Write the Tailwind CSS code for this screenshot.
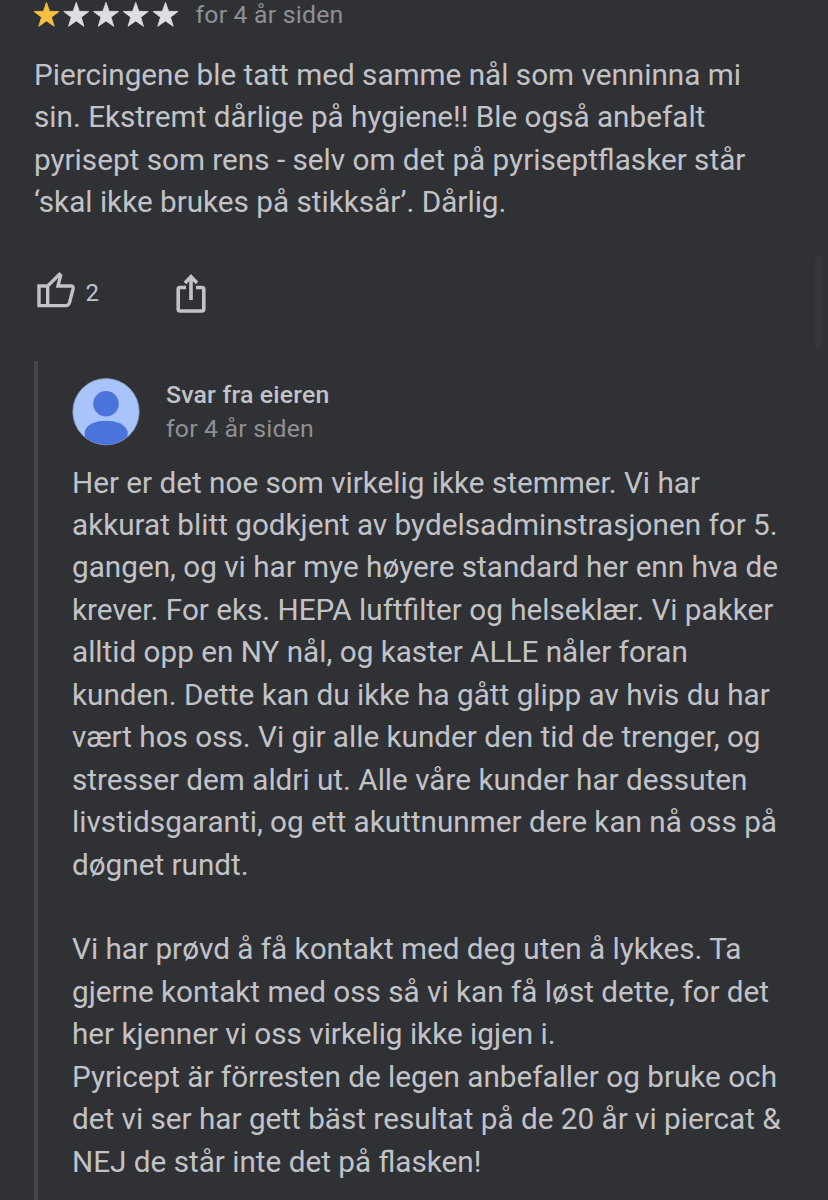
<!DOCTYPE html>
<html lang="no">
<head>
    <meta charset="UTF-8">
    <meta name="viewport" content="width=device-width, initial-scale=1.0">
    <title>Anmeldelse</title>
    <script src="https://cdn.jsdelivr.net/npm/@tailwindcss/browser@4"></script>
</head>
<body class="relative h-[1200px] overflow-hidden bg-[#303134] font-[Roboto,sans-serif] text-[#c2c3c8]">
    <!-- Rating -->
    <div class="flex h-[30px] items-center pl-[31px]">
        <svg class="h-[30px] w-[150px] shrink-0" viewBox="0 0 150 30">
            <defs>
                <path id="star" d="M15.5 2.4l3.1 8.9 9.4.2-7.5 5.7 2.7 9.1-7.7-5.4-7.7 5.4 2.7-9.1-7.5-5.7 9.4-.2z" stroke-width="0.8" stroke-linejoin="round"/>
            </defs>
            <use href="#star" fill="#f6c043" stroke="#f6c043"/>
            <use href="#star" x="29.75" fill="#dddee3" stroke="#dddee3"/>
            <use href="#star" x="59.5" fill="#dddee3" stroke="#dddee3"/>
            <use href="#star" x="89.25" fill="#dddee3" stroke="#dddee3"/>
            <use href="#star" x="119" fill="#dddee3" stroke="#dddee3"/>
        </svg>
        <span class="ml-[14.5px] text-[24.8px] leading-[30px] tracking-[0.2px] whitespace-nowrap text-[#8f9094]">for 4 år siden</span>
    </div>

    <!-- Review text -->
    <p class="mt-[24px] ml-[34px] text-[29.7px] leading-[42.45px] whitespace-nowrap">
        Piercingene ble tatt med samme nål som venninna mi<br>
        sin. Ekstremt dårlige på hygiene!! Ble også anbefalt<br>
        pyrisept som rens - selv om det på pyriseptflasker står<br>
        ‘skal ikke brukes på stikksår’. Dårlig.
    </p>

    <!-- Actions -->
    <div class="mt-[46px] flex h-[44px] items-center pl-[34px]">
        <svg class="h-[44px] w-[44px] shrink-0" viewBox="34 270 44 44" fill="none" stroke="#c2c3c8" stroke-width="3.4">
            <path d="M39 286h8.7v19.6H39zM47.7 286L59.4 274.4 60.6 275.6 58 286H71.3Q73.5 286 73.1 288.6L69.6 302.4Q68.7 305.6 66 305.6H47.7"/>
        </svg>
        <span class="ml-[7.5px] w-[16px] pt-[3px] text-[24px] leading-[44px]">2</span>
        <svg class="ml-[72.5px] h-[44px] w-[36px] shrink-0" viewBox="174 270 36 44" fill="none" stroke="#c2c3c8" stroke-width="3.6">
            <path d="M186 287.5H180Q178.2 287.5 178.2 289.3V309Q178.2 311 180 311H202Q203.8 311 203.8 309V289.3Q203.8 287.5 202 287.5H196M191 300V277M185 283L191 276.7 197 283"/>
        </svg>
    </div>

    <!-- Owner reply -->
    <div class="mt-[47px] ml-[34px] h-[850px] border-l-4 border-[#434548] pl-[34px]">
        <div class="flex pt-[17px]">
            <svg class="h-[68px] w-[68px] shrink-0" viewBox="0 0 68 68">
                <defs>
                    <clipPath id="avatar"><circle cx="34" cy="33.7" r="33"/></clipPath>
                </defs>
                <circle cx="34" cy="33.7" r="33.2" fill="#a8c4fb" stroke="#8a98b5" stroke-width="0.8"/>
                <g clip-path="url(#avatar)" fill="#4b73dc">
                    <circle cx="34" cy="25.7" r="12.8"/>
                    <path d="M12.8 70V53.5C15 46 24 42.8 34 42.8S53 46 55.6 53.5V70z"/>
                </g>
            </svg>
            <div class="ml-[26px] text-[24.8px] leading-[34px] tracking-[0.2px] whitespace-nowrap">
                <div class="font-medium">Svar fra eieren</div>
                <div class="text-[#8f9094]">for 4 år siden</div>
            </div>
        </div>
        <p class="mt-[15.7px] text-[29.7px] leading-[42.45px] whitespace-nowrap">
            Her er det noe som virkelig ikke stemmer. Vi har<br>
            akkurat blitt godkjent av bydelsadminstrasjonen for 5.<br>
            gangen, og vi har mye høyere standard her enn hva de<br>
            krever. For eks. HEPA luftfilter og helseklær. Vi pakker<br>
            alltid opp en NY nål, og kaster ALLE nåler foran<br>
            kunden. Dette kan du ikke ha gått glipp av hvis du har<br>
            vært hos oss. Vi gir alle kunder den tid de trenger, og<br>
            stresser dem aldri ut. Alle våre kunder har dessuten<br>
            livstidsgaranti, og ett akuttnunmer dere kan nå oss på<br>
            døgnet rundt.<br>
            <br>
            Vi har prøvd å få kontakt med deg uten å lykkes. Ta<br>
            gjerne kontakt med oss så vi kan få løst dette, for det<br>
            her kjenner vi oss virkelig ikke igjen i.<br>
            Pyricept är förresten de legen anbefaller og bruke och<br>
            det vi ser har gett bäst resultat på de 20 år vi piercat &amp;<br>
            NEJ de står inte det på flasken!
        </p>
    </div>

    <!-- Scrollbar -->
    <div class="absolute top-[255px] right-[6px] h-[93px] w-[7px] rounded-full bg-[#37363a]"></div>
</body>
</html>
